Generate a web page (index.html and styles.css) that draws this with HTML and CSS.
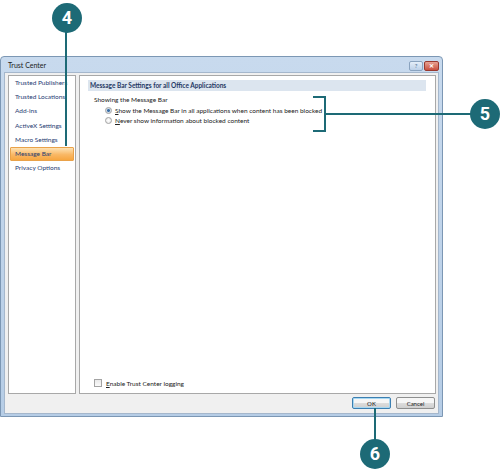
FILE: index.html
```html
<!DOCTYPE html>
<html lang="en">
<head>
  <meta charset="UTF-8" />
  <title>Trust Center — Message Bar</title>
  <link rel="stylesheet" href="styles.css">
</head>
<body>

  <div class="window">
    <div class="titlebar">
      <span class="title">Trust Center</span>
      <div class="caption-btns">
        <span class="cap help">?</span>
        <span class="cap close">&#x2715;</span>
      </div>
    </div>

    <div class="client">
      <div class="panes">
        <ul class="nav">
          <li>Trusted Publishers</li>
          <li>Trusted Locations</li>
          <li>Add-ins</li>
          <li>ActiveX Settings</li>
          <li>Macro Settings</li>
          <li class="active">Message Bar</li>
          <li>Privacy Options</li>
        </ul>

        <div class="content">
          <div class="section-head">Message Bar Settings for all Office Applications</div>
          <div class="group-label">Showing the Message Bar</div>
          <div class="opt"><span class="radio on"></span><span><u>S</u>how the Message Bar in all applications when content has been blocked</span></div>
          <div class="opt"><span class="radio"></span><span><u>N</u>ever show information about blocked content</span></div>

          <div class="spacer"></div>

          <div class="check-row"><span class="checkbox"></span><span><u>E</u>nable Trust Center logging</span></div>
        </div>
      </div>

      <div class="footer">
        <button class="btn default">OK</button>
        <button class="btn">Cancel</button>
      </div>
    </div>
  </div>

  <!-- callouts drawn over the screenshot -->
  <svg class="callouts" width="500" height="470" viewBox="0 0 500 470">
    <g stroke="#1d6a76" stroke-width="2" fill="none">
      <line x1="66" y1="18" x2="66" y2="146" />
      <polyline points="313,97 325,97 325,131 313,131" />
      <line x1="325" y1="114" x2="485" y2="114" />
      <line x1="375" y1="408" x2="375" y2="454" />
    </g>
    <g fill="#1d6a76">
      <circle cx="67" cy="18" r="15" />
      <circle cx="485" cy="114" r="15" />
      <circle cx="375" cy="454" r="15" />
    </g>
    <g class="num" fill="#fff" text-anchor="middle">
      <text x="67" y="24">4</text>
      <text x="485" y="120">5</text>
      <text x="375" y="460">6</text>
    </g>
  </svg>

</body>
</html>
```

FILE: styles.css
```css
body {
  margin: 0;
  background: #fff;
  font-family: "Lato", "Open Sans", sans-serif;
  font-size: 6.5px;
  color: #222;
  position: relative;
  width: 500px;
  height: 470px;
  overflow: hidden;
}

.window {
  margin-top: 56px;
  width: 443px;
  height: 361px;
  box-sizing: border-box;
  border: 1px solid #7c97b4;
  border-radius: 4px 4px 0 0;
  background: linear-gradient(#c8daee, #b6cde6);
  padding: 0 3px 2px 3px;
  display: flex;
  flex-direction: column;
}

.titlebar {
  height: 15px;
  display: flex;
  align-items: center;
  justify-content: space-between;
}

.title {
  color: #1b1b1b;
  font-size: 7px;
  padding-left: 4px;
}

.caption-btns {
  display: flex;
  gap: 1px;
  margin-top: 2px;
}

.cap {
  height: 8px;
  display: flex;
  align-items: center;
  justify-content: center;
  border: 1px solid #8aa3bf;
  border-radius: 2px;
  font-size: 6px;
  line-height: 1;
}

.help {
  width: 12px;
  background: linear-gradient(#e4eef9, #bcd0e8);
  color: #4d6a8d;
}

.close {
  width: 13px;
  background: linear-gradient(#e8a293, #c9503f);
  border-color: #99392f;
  color: #fff;
  font-weight: bold;
}

.client {
  flex: 1;
  background: #f0f0f0;
  border: 1px solid #a5b7cc;
  display: flex;
  flex-direction: column;
  padding: 2px 2px 0 3px;
}

.panes {
  flex: 1;
  display: flex;
  gap: 3px;
}

.nav {
  width: 64px;
  list-style: none;
  margin: 0;
  padding: 0 1px;
  background: #fff;
  border: 1px solid #a8a8a8;
}

.nav li {
  height: 14.2px;
  line-height: 14.2px;
  padding-left: 5px;
  color: #1f3d73;
  white-space: nowrap;
  overflow: hidden;
}

.nav li.active {
  background: linear-gradient(#fde2b4, #f9b865 55%, #f7a640);
  border: 1px solid #e9a24a;
  border-radius: 1px;
  height: 11.2px;
  line-height: 11.2px;
  margin: 0.5px 0;
  padding-left: 4px;
}

.content {
  flex: 1;
  background: #fff;
  border: 1px solid #a8a8a8;
  display: flex;
  flex-direction: column;
  padding: 4px 9px 6px 8px;
}

.section-head {
  height: 11px;
  line-height: 11px;
  background: #dce5ef;
  color: #1f3864;
  font-weight: bold;
  padding-left: 2px;
}

.group-label {
  margin-top: 4px;
  padding-left: 6px;
  height: 10px;
  line-height: 10px;
}

.opt {
  display: flex;
  align-items: center;
  gap: 3px;
  padding-left: 17px;
  height: 10px;
}

.radio {
  width: 5px;
  height: 5px;
  border-radius: 50%;
  border: 1px solid #a3a3a3;
  background: radial-gradient(#fff, #e4e4e4);
  flex: none;
}

.radio.on {
  background: radial-gradient(#3a6ea5 35%, #c9d7e6 45%, #f2f2f2);
}

.spacer {
  flex: 1;
}

.check-row {
  display: flex;
  align-items: center;
  gap: 4px;
  padding-left: 6px;
}

.checkbox {
  width: 6px;
  height: 6px;
  border: 1px solid #a3a3a3;
  background: linear-gradient(#e9e9e9, #fafafa);
  flex: none;
}

.footer {
  height: 19px;
  display: flex;
  align-items: flex-start;
  justify-content: flex-end;
  gap: 5px;
  padding: 3px 1px 0 0;
  box-sizing: border-box;
}

.btn {
  width: 39px;
  height: 12px;
  padding: 0;
  font-family: inherit;
  font-size: 6px;
  color: #222;
  border: 1px solid #8e8f8f;
  border-radius: 2px;
  background: linear-gradient(#f6f6f6 50%, #dddddd 50%, #cfcfcf);
}

.btn.default {
  border-color: #3c7fb1;
  box-shadow: inset 0 0 0 1px #a8d8f2;
}

.callouts {
  position: absolute;
  left: 0;
  top: 0;
}

.num text {
  font-family: "Roboto", "Liberation Sans", sans-serif;
  font-weight: bold;
  font-size: 18px;
}
```
